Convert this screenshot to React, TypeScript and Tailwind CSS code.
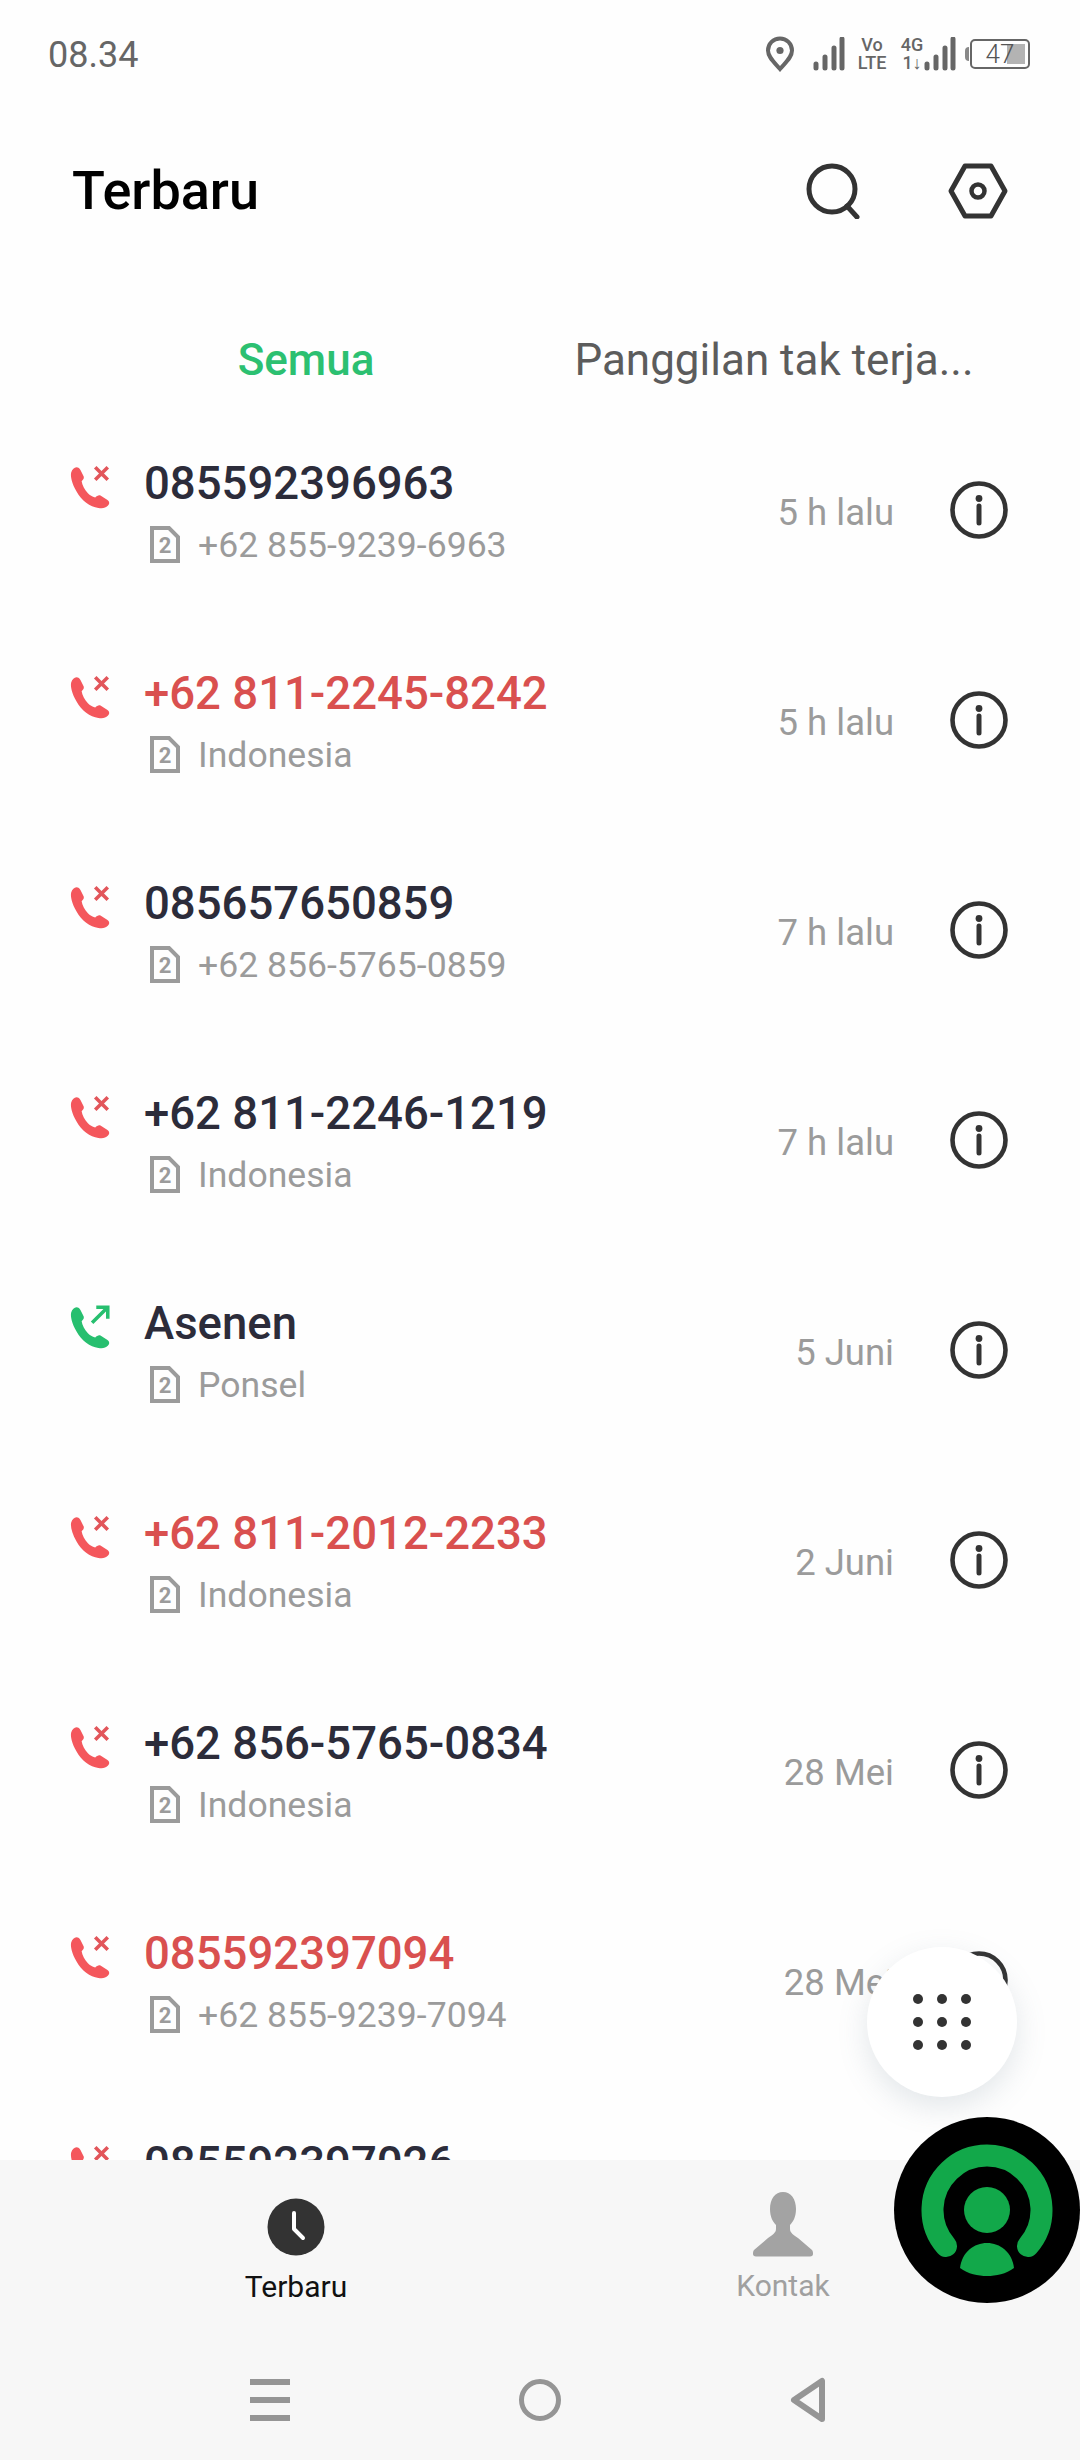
type Call = {
    name: string;
    sub: string;
    time: string;
    missed?: boolean;
    red?: boolean;
};

const calls: Call[] = [
    { name: "085592396963", sub: "+62 855-9239-6963", time: "5 h lalu", missed: true },
    { name: "+62 811-2245-8242", sub: "Indonesia", time: "5 h lalu", missed: true, red: true },
    { name: "085657650859", sub: "+62 856-5765-0859", time: "7 h lalu", missed: true },
    { name: "+62 811-2246-1219", sub: "Indonesia", time: "7 h lalu", missed: true },
    { name: "Asenen", sub: "Ponsel", time: "5 Juni" },
    { name: "+62 811-2012-2233", sub: "Indonesia", time: "2 Juni", missed: true, red: true },
    { name: "+62 856-5765-0834", sub: "Indonesia", time: "28 Mei", missed: true },
    { name: "085592397094", sub: "+62 855-9239-7094", time: "28 Mei", missed: true, red: true },
    // last row is cut off by the tab bar, only the top of the number shows
    { name: "085592397026", sub: "", time: "", missed: true },
];

const handset =
    "M9 4C11 4 12 5 13 7L16 13C16.5 15 15.5 16 14 17.5C14.5 21 17 26 20 29C22 31 24 32 27 33C28.5 31.5 30 30.5 32 31L38 35C41 37 41 39 39 41C37 43 34 44 30 43C22 42 14 36 9 27C5 20 3 13 4 9C5 6 7 4 9 4Z";

function CallIcon({ missed }: { missed?: boolean }) {
    return (
        <svg width="46" height="46" viewBox="0 0 44 44" className="block -ml-[1px]">
            <path d={handset} fill={missed ? "#f4575c" : "#27bf6f"} />
            {missed ? (
                <path d="M27 4L39 16M39 4L27 16" stroke="#e2555a" strokeWidth="3.4" fill="none" />
            ) : (
                <path d="M24 19L38 5M28 4H39V15" stroke="#27bf6f" strokeWidth="3.4" fill="none" />
            )}
        </svg>
    );
}

function SimIcon() {
    return (
        <svg width="30" height="37" viewBox="0 0 30 37" className="block shrink-0">
            <path d="M2 2H19L28 11V35H2Z" fill="none" stroke="#9b9b9b" strokeWidth="4" />
            <text x="15" y="27" textAnchor="middle" fontSize="22" fontWeight="700" fill="#9b9b9b" fontFamily="Roboto, sans-serif">
                2
            </text>
        </svg>
    );
}

function InfoIcon() {
    return (
        <svg width="58" height="58" viewBox="0 0 58 58" className="block shrink-0 mt-[2px]">
            <circle cx="29" cy="29" r="26.5" fill="none" stroke="#333333" strokeWidth="4.6" />
            <circle cx="29" cy="17.5" r="3.4" fill="#333333" />
            <path d="M29 25V42" stroke="#333333" strokeWidth="5" strokeLinecap="round" />
        </svg>
    );
}

function Signal() {
    return (
        <svg width="32" height="34" viewBox="0 0 32 34" className="block">
            <path d="M3 27V31M12 20V31M21 11V31M29 2V31" stroke="#666666" strokeWidth="5" strokeLinecap="round" fill="none" />
        </svg>
    );
}

function StatusBar() {
    return (
        <div className="flex items-center justify-between h-[108px] pl-[48px] pr-[50px] text-[#666666]">
            <span className="text-[36px] leading-none mt-[2px]">08.34</span>
            <div className="flex items-center">
                <svg width="30" height="36" viewBox="0 0 30 36" className="block mr-[18px]">
                    <path d="M15 33C9 26 3 21 3 14.5C3 7.5 8.5 2.5 15 2.5C21.5 2.5 27 7.5 27 14.5C27 21 21 26 15 33Z" fill="none" stroke="#666666" strokeWidth="4" />
                    <circle cx="15" cy="14.5" r="3.6" fill="#666666" />
                </svg>
                <Signal />
                <div className="ml-[12px] w-[30px] flex flex-col items-center text-[18px] leading-[18px] font-medium">
                    <span>Vo</span>
                    <span>LTE</span>
                </div>
                <div className="ml-[13px] w-[24px] flex flex-col items-center text-[18px] leading-[18px] font-medium">
                    <span>4G</span>
                    <span>1↓</span>
                </div>
                <Signal />
                <div className="ml-[9px] w-[4px] h-[14px] bg-[#888888] rounded-l-sm" />
                <div className="relative ml-[1px] w-[60px] h-[30px] border-[2px] border-[#666666] rounded-[5px] flex items-center justify-center">
                    <div className="absolute right-[3px] top-[3px] bottom-[3px] w-[18px] bg-[#b3b3b3]" />
                    <span className="relative text-[26px] leading-none font-light text-[#555555]">47</span>
                </div>
            </div>
        </div>
    );
}

function CallRow({ call }: { call: Call }) {
    return (
        <div className="flex items-center h-[210px] shrink-0 pl-[68px] pr-[72px]">
            <div className="w-[76px] self-start pt-[59px]">
                <CallIcon missed={call.missed} />
            </div>
            <div className="flex-1 min-w-0 pt-[6px]">
                <div className={`text-[45.5px] leading-[56px] font-medium ${call.red ? "text-[#d9504f]" : "text-[#2c2c3a]"}`}>
                    {call.name}
                </div>
                <div className="flex items-center min-h-[48px] mt-[9px] ml-[6px] text-[35.6px] leading-[48px] text-[#9b9b9b]">
                    <SimIcon />
                    <span className="ml-[18px]">{call.sub}</span>
                </div>
            </div>
            <span className="text-[36.5px] text-[#9b9b9b] mr-[56px] pt-[8px]">{call.time}</span>
            <InfoIcon />
        </div>
    );
}

function NavBar() {
    return (
        <div className="bg-[#f7f7f7] h-[300px] shrink-0 flex flex-col">
            <div className="flex h-[180px] pt-[31px]">
                <div className="w-[592px] flex flex-col items-center">
                    <svg width="58" height="58" viewBox="0 0 58 58" className="block mt-[7px]">
                        <circle cx="29" cy="29" r="28.5" fill="#333333" />
                        <path d="M27 15V31L36 40" stroke="#ffffff" strokeWidth="4" fill="none" strokeLinecap="round" strokeLinejoin="round" />
                    </svg>
                    <span className="mt-[11px] text-[30px] leading-[40px] text-[#111111]">Terbaru</span>
                </div>
                <div className="w-[382px] flex flex-col items-center">
                    <svg width="62" height="66" viewBox="0 0 62 66" className="block">
                        <path d="M31 1C39 1 44 8 44 18C44 26 41 31 38 34V38C38 42 42 44 46 47L60 59C61 60 61 62 61 63C61 64.500 60 65.500 58 65.500H4C2 65.500 1 64.500 1 63C1 62 1 60 2 59L16 47C20 44 24 42 24 38V34C21 31 18 26 18 18C18 8 23 1 31 1Z" fill="#a3a3a3" />
                    </svg>
                    <span className="mt-[9px] text-[30px] leading-[40px] text-[#a0a0a0]">Kontak</span>
                </div>
            </div>
            <div className="flex items-center h-[120px] pl-[250px]">
                <div className="flex flex-col gap-[12px]">
                    <div className="w-[40px] h-[6px] bg-[#959595]" />
                    <div className="w-[40px] h-[6px] bg-[#959595]" />
                    <div className="w-[40px] h-[6px] bg-[#959595]" />
                </div>
                <div className="ml-[229px] w-[42px] h-[42px] rounded-full border-[5px] border-[#959595]" />
                <svg width="36" height="46" viewBox="0 0 36 46" className="block ml-[229px]">
                    <path d="M32 4V42L4 23Z" fill="none" stroke="#959595" strokeWidth="6" strokeLinejoin="round" />
                </svg>
            </div>
        </div>
    );
}

export default function App() {
    return (
        <div className="relative w-[1080px] h-[2460px] bg-[#fefefe] overflow-hidden flex flex-col font-['Roboto',sans-serif]">
            <StatusBar />

            {/* Header */}
            <div className="flex items-center justify-between h-[166px] pl-[72px] pr-[72px]">
                <h1 className="text-[54px] leading-none font-medium text-black">Terbaru</h1>
                <div className="flex items-center gap-[88px]">
                    <svg width="54" height="56" viewBox="0 0 54 56" className="block">
                        <circle cx="26" cy="26" r="23" fill="none" stroke="#333333" strokeWidth="5" />
                        <path d="M41 43L51 54" stroke="#333333" strokeWidth="5" strokeLinecap="round" />
                    </svg>
                    <svg width="60" height="56" viewBox="0 0 60 56" className="block">
                        <path d="M17 3H43L57 28L43 53H17L3 28Z" fill="none" stroke="#333333" strokeWidth="5" strokeLinejoin="round" />
                        <circle cx="30" cy="28" r="6.5" fill="none" stroke="#333333" strokeWidth="4.500" />
                    </svg>
                </div>
            </div>

            {/* Tabs */}
            <div className="grid grid-cols-2 px-[72px] h-[130px] pt-[42px] items-center text-[44px] leading-none">
                <div className="text-center font-medium text-[#2cc071]">Semua</div>
                <div className="text-center text-[#5c5c5c] whitespace-nowrap">Panggilan tak terja...</div>
            </div>

            {/* Call list */}
            <div className="flex-1 min-h-0 overflow-hidden flex flex-col">
                {calls.map((call) => (
                    <CallRow key={call.name} call={call} />
                ))}
            </div>

            <NavBar />

            {/* Dial pad button */}
            <div className="absolute left-[867px] top-[1947px] w-[150px] h-[150px] rounded-full bg-white shadow-[0_10px_30px_rgba(100,120,140,0.18)] grid grid-cols-[10px_10px_10px] gap-x-[14px] gap-y-[13px] place-content-center">
                {Array.from({ length: 9 }).map((_, i) => (
                    <div key={i} className="w-[10px] h-[10px] rounded-full bg-[#333333]" />
                ))}
            </div>

            {/* Floating overlay bubble */}
            <svg width="186" height="186" viewBox="0 0 186 186" className="absolute left-[894px] top-[2117px]">
                <circle cx="93" cy="93" r="93" fill="#000000" />
                <path d="M52 129A54.500 54.500 0 1 1 134 129" fill="none" stroke="#12a84a" strokeWidth="22" strokeLinecap="round" />
                <circle cx="93" cy="93" r="23" fill="#12a84a" />
                <path d="M66 151C68 135 80 126 93 126C106 126 118 135 120 151C112 157 102 159 93 159C84 159 74 157 66 151Z" fill="#12a84a" />
            </svg>
        </div>
    );
}
